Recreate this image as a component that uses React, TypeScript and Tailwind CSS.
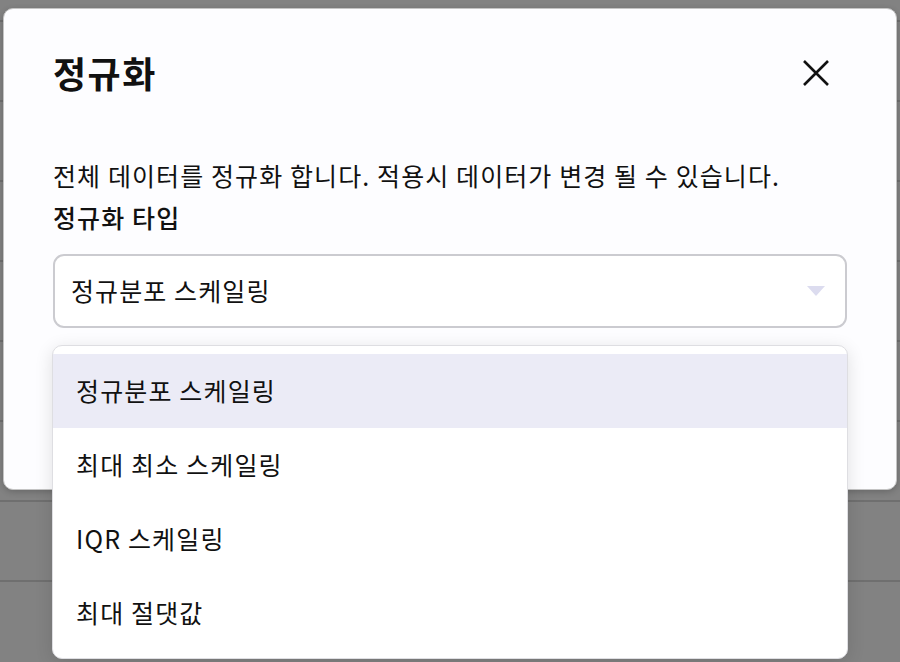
const options = ['정규분포 스케일링', '최대 최소 스케일링', 'IQR 스케일링', '최대 절댓값'];

export default function App() {
  const rows = Array.from({ length: 8 });

  return (
    <div
      className="relative h-[662px] w-[900px] overflow-hidden bg-[#828282] text-[#111111]"
      style={{ fontFamily: '"Noto Sans CJK KR", "Noto Sans", sans-serif' }}
    >
      {/* dimmed page behind the dialog */}
      <div className="pt-[20px]">
        {rows.map((_, i) => (
          <div key={i} className="h-[80px] border-t-2 border-[#6f6f6f]" />
        ))}
      </div>

      {/* Dialog */}
      <div className="absolute left-[3px] top-[8px] h-[482px] w-[894px] rounded-[10px] border border-[#c4c4c4] bg-[#fdfdff] shadow-[0_2px_6px_rgba(0,0,0,0.2)]">
        <div className="flex items-center justify-between pl-[49px] pr-[67px] pt-[40px]">
          <h1 className="text-[36px] font-bold leading-[46px] tracking-[1.5px]">정규화</h1>
          <svg width="26" height="26" viewBox="0 0 26 26" className="mt-[1px]">
            <path d="M1 1 L25 25 M25 1 L1 25" stroke="#111111" strokeWidth="2.6" fill="none" />
          </svg>
        </div>

        <div className="mt-[59px] px-[49px]">
          <p className="text-[25px] leading-[42px] tracking-[1.1px]">
            전체 데이터를 정규화 합니다. 적용시 데이터가 변경 될 수 있습니다.
          </p>
          <p className="text-[25px] font-medium leading-[42px] tracking-[1.1px]">정규화 타입</p>

          <div className="mt-[16px] flex h-[74px] items-center justify-between rounded-[11px] border-2 border-[#cbcbd0] bg-white pl-[16px] pr-[20px]">
            <span className="text-[25px] tracking-[1.1px]">정규분포 스케일링</span>
            <svg width="18" height="10" viewBox="0 0 18 10">
              <path d="M0 0 L18 0 L9 10 Z" fill="#dcdcef" />
            </svg>
          </div>
        </div>
      </div>

      {/* Open listbox */}
      <div className="absolute left-[52px] top-[345px] w-[796px] rounded-[10px] border border-[#dedee2] bg-white py-[8px] shadow-[0_4px_18px_rgba(0,0,0,0.12)]">
        {options.map((opt, i) => (
          <div
            key={opt}
            className={`flex h-[74px] items-center px-[23px] text-[25px] tracking-[1.15px] ${
              i === 0 ? 'bg-[#ebebf6]' : ''
            }`}
          >
            {opt}
          </div>
        ))}
      </div>
    </div>
  );
}
